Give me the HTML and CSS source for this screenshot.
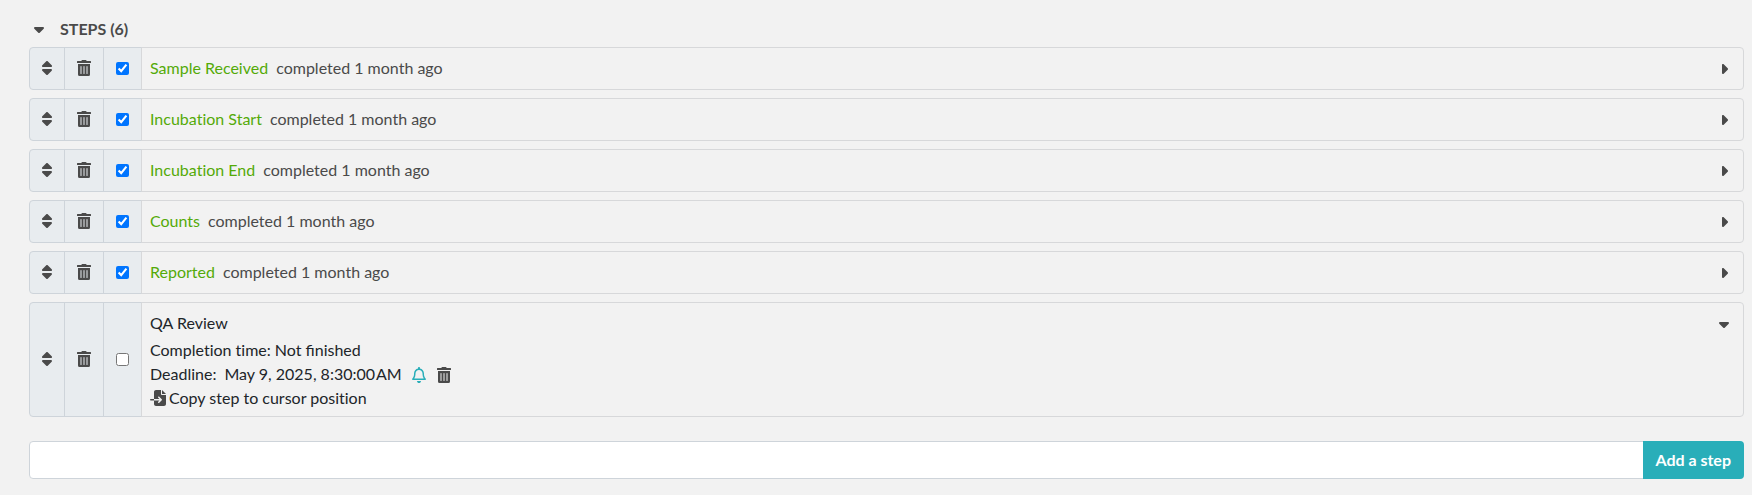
FILE: index.html
```html
<!DOCTYPE html>
<html lang="en">
<head>
  <meta charset="UTF-8" />
  <meta name="viewport" content="width=device-width, initial-scale=1.0" />
  <title>Steps</title>
  <link rel="stylesheet" href="styles.css">
</head>
<body>
  <!-- icon set -->
  <svg class="sprite" aria-hidden="true">
    <symbol id="i-sort" viewBox="0 0 320 512"><path d="M137.4 41.4c12.5-12.5 32.8-12.5 45.3 0l128 128c9.2 9.2 11.9 22.9 6.9 34.9s-16.6 19.8-29.6 19.8H32c-12.9 0-24.6-7.8-29.6-19.8s-2.2-25.7 6.9-34.9l128-128zm0 429.3l-128-128c-9.2-9.2-11.9-22.9-6.9-34.9s16.6-19.8 29.6-19.8H288c12.9 0 24.6 7.8 29.6 19.8s2.2 25.7-6.9 34.9l-128 128c-12.5 12.5-32.8 12.5-45.3 0z"/></symbol>
    <symbol id="i-trash" viewBox="0 0 448 512"><path d="M32 464a48 48 0 0 0 48 48h288a48 48 0 0 0 48-48V128H32zm272-256a16 16 0 0 1 32 0v224a16 16 0 0 1-32 0zm-96 0a16 16 0 0 1 32 0v224a16 16 0 0 1-32 0zm-96 0a16 16 0 0 1 32 0v224a16 16 0 0 1-32 0zM432 32H312l-9.4-18.7A24 24 0 0 0 281.1 0H166.8a23.7 23.7 0 0 0-21.4 13.3L136 32H16A16 16 0 0 0 0 48v32a16 16 0 0 0 16 16h416a16 16 0 0 0 16-16V48a16 16 0 0 0-16-16z"/></symbol>
    <symbol id="i-caret-down" viewBox="0 0 320 512"><path d="M137.4 374.6c12.5 12.5 32.8 12.5 45.3 0l128-128c9.2-9.2 11.9-22.9 6.9-34.9s-16.6-19.8-29.6-19.8L32 192c-12.9 0-24.6 7.8-29.6 19.8s-2.2 25.7 6.9 34.9l128 128z"/></symbol>
    <symbol id="i-caret-right" viewBox="0 0 256 512"><path d="M246.6 278.6c12.5-12.5 12.5-32.8 0-45.3l-128-128c-9.2-9.2-22.9-11.9-34.9-6.9s-19.8 16.6-19.8 29.6l0 256c0 12.9 7.8 24.6 19.8 29.6s25.7 2.2 34.9-6.9l128-128z"/></symbol>
    <symbol id="i-bell" viewBox="0 0 448 512"><path d="M224 0c-17.7 0-32 14.3-32 32V51.2C119 66 64 130.6 64 208v25.4c0 45.4-15.5 89.5-43.8 124.9L5.3 377c-5.8 7.2-6.9 17.1-2.9 25.4S14.8 416 24 416H424c9.2 0 17.6-5.3 21.6-13.6s2.9-18.2-2.9-25.4l-14.9-18.6C399.5 322.9 384 278.8 384 233.4V208c0-77.4-55-142-128-156.8V32c0-17.7-14.3-32-32-32zm0 96c61.9 0 112 50.1 112 112v25.4c0 47.9 13.9 94.6 39.7 134.6H72.3C98.1 328 112 281.3 112 233.4V208c0-61.9 50.1-112 112-112zm64 352H224 160c0 17 6.7 33.3 18.7 45.3s28.3 18.7 45.3 18.7s33.3-6.7 45.3-18.7s18.7-28.3 18.7-45.3z"/></symbol>
    <symbol id="i-import" viewBox="0 0 512 512"><path d="M128 64c0-35.3 28.7-64 64-64H352V128c0 17.7 14.3 32 32 32H512V448c0 35.3-28.7 64-64 64H192c-35.3 0-64-28.7-64-64V336H302.1l-39 39c-9.4 9.4-9.4 24.6 0 33.9s24.6 9.4 33.9 0l80-80c9.4-9.4 9.4-24.6 0-33.9l-80-80c-9.4-9.4-24.6-9.4-33.9 0s-9.4 24.6 0 33.9l39 39H128V64zm0 224v48H24c-13.3 0-24-10.7-24-24s10.7-24 24-24H128zM512 128H384V0L512 128z"/></symbol>
  </svg>

  <section class="steps">
    <h2>
      <button class="heading-toggle" aria-expanded="true">
        <svg class="icon icon-10"><use href="#i-caret-down"/></svg>
        <span>STEPS (6)</span>
      </button>
    </h2>

    <ul class="step-list">
      <li class="step">
        <span class="cell handle"><svg class="icon icon-10"><use href="#i-sort"/></svg></span>
        <button class="cell" aria-label="Delete"><svg class="icon icon-14"><use href="#i-trash"/></svg></button>
        <label class="cell"><input type="checkbox" aria-label="Sample Received" checked></label>
        <div class="step-body">
          <div class="step-head">
            <p><span class="done">Sample Received</span><span class="when">completed 1 month ago</span></p>
            <button class="toggle" aria-label="Expand"><svg class="icon icon-8"><use href="#i-caret-right"/></svg></button>
          </div>
        </div>
      </li>
      <li class="step">
        <span class="cell handle"><svg class="icon icon-10"><use href="#i-sort"/></svg></span>
        <button class="cell" aria-label="Delete"><svg class="icon icon-14"><use href="#i-trash"/></svg></button>
        <label class="cell"><input type="checkbox" aria-label="Incubation Start" checked></label>
        <div class="step-body">
          <div class="step-head">
            <p><span class="done">Incubation Start</span><span class="when">completed 1 month ago</span></p>
            <button class="toggle" aria-label="Expand"><svg class="icon icon-8"><use href="#i-caret-right"/></svg></button>
          </div>
        </div>
      </li>
      <li class="step">
        <span class="cell handle"><svg class="icon icon-10"><use href="#i-sort"/></svg></span>
        <button class="cell" aria-label="Delete"><svg class="icon icon-14"><use href="#i-trash"/></svg></button>
        <label class="cell"><input type="checkbox" aria-label="Incubation End" checked></label>
        <div class="step-body">
          <div class="step-head">
            <p><span class="done">Incubation End</span><span class="when">completed 1 month ago</span></p>
            <button class="toggle" aria-label="Expand"><svg class="icon icon-8"><use href="#i-caret-right"/></svg></button>
          </div>
        </div>
      </li>
      <li class="step">
        <span class="cell handle"><svg class="icon icon-10"><use href="#i-sort"/></svg></span>
        <button class="cell" aria-label="Delete"><svg class="icon icon-14"><use href="#i-trash"/></svg></button>
        <label class="cell"><input type="checkbox" aria-label="Counts" checked></label>
        <div class="step-body">
          <div class="step-head">
            <p><span class="done">Counts</span><span class="when">completed 1 month ago</span></p>
            <button class="toggle" aria-label="Expand"><svg class="icon icon-8"><use href="#i-caret-right"/></svg></button>
          </div>
        </div>
      </li>
      <li class="step">
        <span class="cell handle"><svg class="icon icon-10"><use href="#i-sort"/></svg></span>
        <button class="cell" aria-label="Delete"><svg class="icon icon-14"><use href="#i-trash"/></svg></button>
        <label class="cell"><input type="checkbox" aria-label="Reported" checked></label>
        <div class="step-body">
          <div class="step-head">
            <p><span class="done">Reported</span><span class="when">completed 1 month ago</span></p>
            <button class="toggle" aria-label="Expand"><svg class="icon icon-8"><use href="#i-caret-right"/></svg></button>
          </div>
        </div>
      </li>
      <li class="step open">
        <span class="cell handle"><svg class="icon icon-10"><use href="#i-sort"/></svg></span>
        <button class="cell" aria-label="Delete"><svg class="icon icon-14"><use href="#i-trash"/></svg></button>
        <label class="cell"><input type="checkbox" aria-label="QA Review"></label>
        <div class="step-body">
          <div class="step-head">
            <p>QA Review</p>
            <button class="toggle" aria-label="Collapse" aria-expanded="true"><svg class="icon icon-10"><use href="#i-caret-down"/></svg></button>
          </div>
          <div class="step-details">
            <p>Completion time: <span class="status">Not finished</span></p>
            <div class="deadline">
              <span>Deadline:</span>
              <time datetime="2025-05-09T08:30">May 9, 2025, 8:30:00&#8202;AM</time>
              <button class="bell" aria-label="Notify"><svg class="icon icon-14"><use href="#i-bell"/></svg></button>
              <button aria-label="Remove deadline"><svg class="icon icon-14"><use href="#i-trash"/></svg></button>
            </div>
            <button class="copy"><svg class="icon icon-16"><use href="#i-import"/></svg>Copy step to cursor position</button>
          </div>
        </div>
      </li>
    </ul>

    <form class="add-step" onsubmit="return false">
      <input type="text" aria-label="Add a step">
      <button type="submit">Add a step</button>
    </form>
  </section>
</body>
</html>
```
FILE: styles.css
```css
:root {
  --bg: #f2f2f2;
  --cell: #e8ecef;
  --border: #ced4da;
  --soft-border: #d7d8da;
  --text: #212529;
  --gray: #4a4a4a;
  --green: #54aa08;
  --accent: #29aeb9;
}

* {
  margin: 0;
  padding: 0;
  box-sizing: border-box;
}

body {
  background: var(--bg);
  color: var(--text);
  font-family: Lato, sans-serif;
  font-size: 16px;
  font-variant-ligatures: none;
  line-height: 24px;
}

button {
  background: none;
  border: none;
  color: inherit;
  font: inherit;
  cursor: pointer;
}

.sprite {
  display: none;
}

.icon {
  display: block;
  height: 16px;
  fill: var(--gray);
}

.icon-8 { width: 8px; }
.icon-10 { width: 10px; }
.icon-14 { width: 14px; }
.icon-16 { width: 16px; }

.steps {
  padding: 17px 8px 16px 29px;
}

.steps h2 {
  font-size: 16px;
  margin-bottom: 6px;
}

.heading-toggle {
  display: flex;
  align-items: center;
  gap: 16px;
  padding-left: 5px;
  color: var(--gray);
}

.step-list {
  display: flex;
  flex-direction: column;
  gap: 8px;
  list-style: none;
}

.step {
  display: flex;
}

.cell {
  display: flex;
  align-items: center;
  padding: 0 12px;
  background: var(--cell);
  border: 1px solid var(--border);
  margin-right: -1px;
}

.cell .icon {
  margin-bottom: 1px;
}

.handle {
  border-radius: 4px 0 0 4px;
  cursor: move;
}

.cell input {
  width: 13px;
  height: 13px;
}

.step-body {
  flex: 1;
  padding: 8px 14px 9px 8px;
  border: 1px solid var(--soft-border);
  border-radius: 0 4px 4px 0;
}

.step-head {
  display: flex;
  align-items: center;
  justify-content: space-between;
}

.done {
  color: var(--green);
  margin-right: 8px;
}

.when {
  color: var(--gray);
}

.toggle {
  padding-top: 1px;
}

.toggle .icon-8 {
  margin-right: 1px;
}

.open .step-body {
  padding-bottom: 6px;
}

.step-details {
  margin-top: 3px;
}

.status {
  font-variant-ligatures: normal;
}

.deadline {
  display: flex;
  align-items: center;
}

.deadline time {
  margin: 0 10px 0 8px;
}

.deadline button {
  padding-top: 2px;
}

.deadline .bell {
  margin-right: 11px;
}

.bell .icon {
  fill: var(--accent);
}

.copy {
  display: flex;
  align-items: center;
  gap: 3px;
}

.add-step {
  display: flex;
  margin-top: 24px;
}

.add-step input {
  flex: 1;
  height: 38px;
  padding: 6px 12px;
  border: 1px solid var(--border);
  border-radius: 4px 0 0 4px;
  background: #fff;
  font: inherit;
  margin-right: -1px;
}

.add-step button {
  padding: 0 13px 0 12px;
  border-radius: 0 4px 4px 0;
  background: var(--accent);
  color: #fff;
  font-weight: bold;
}
```
